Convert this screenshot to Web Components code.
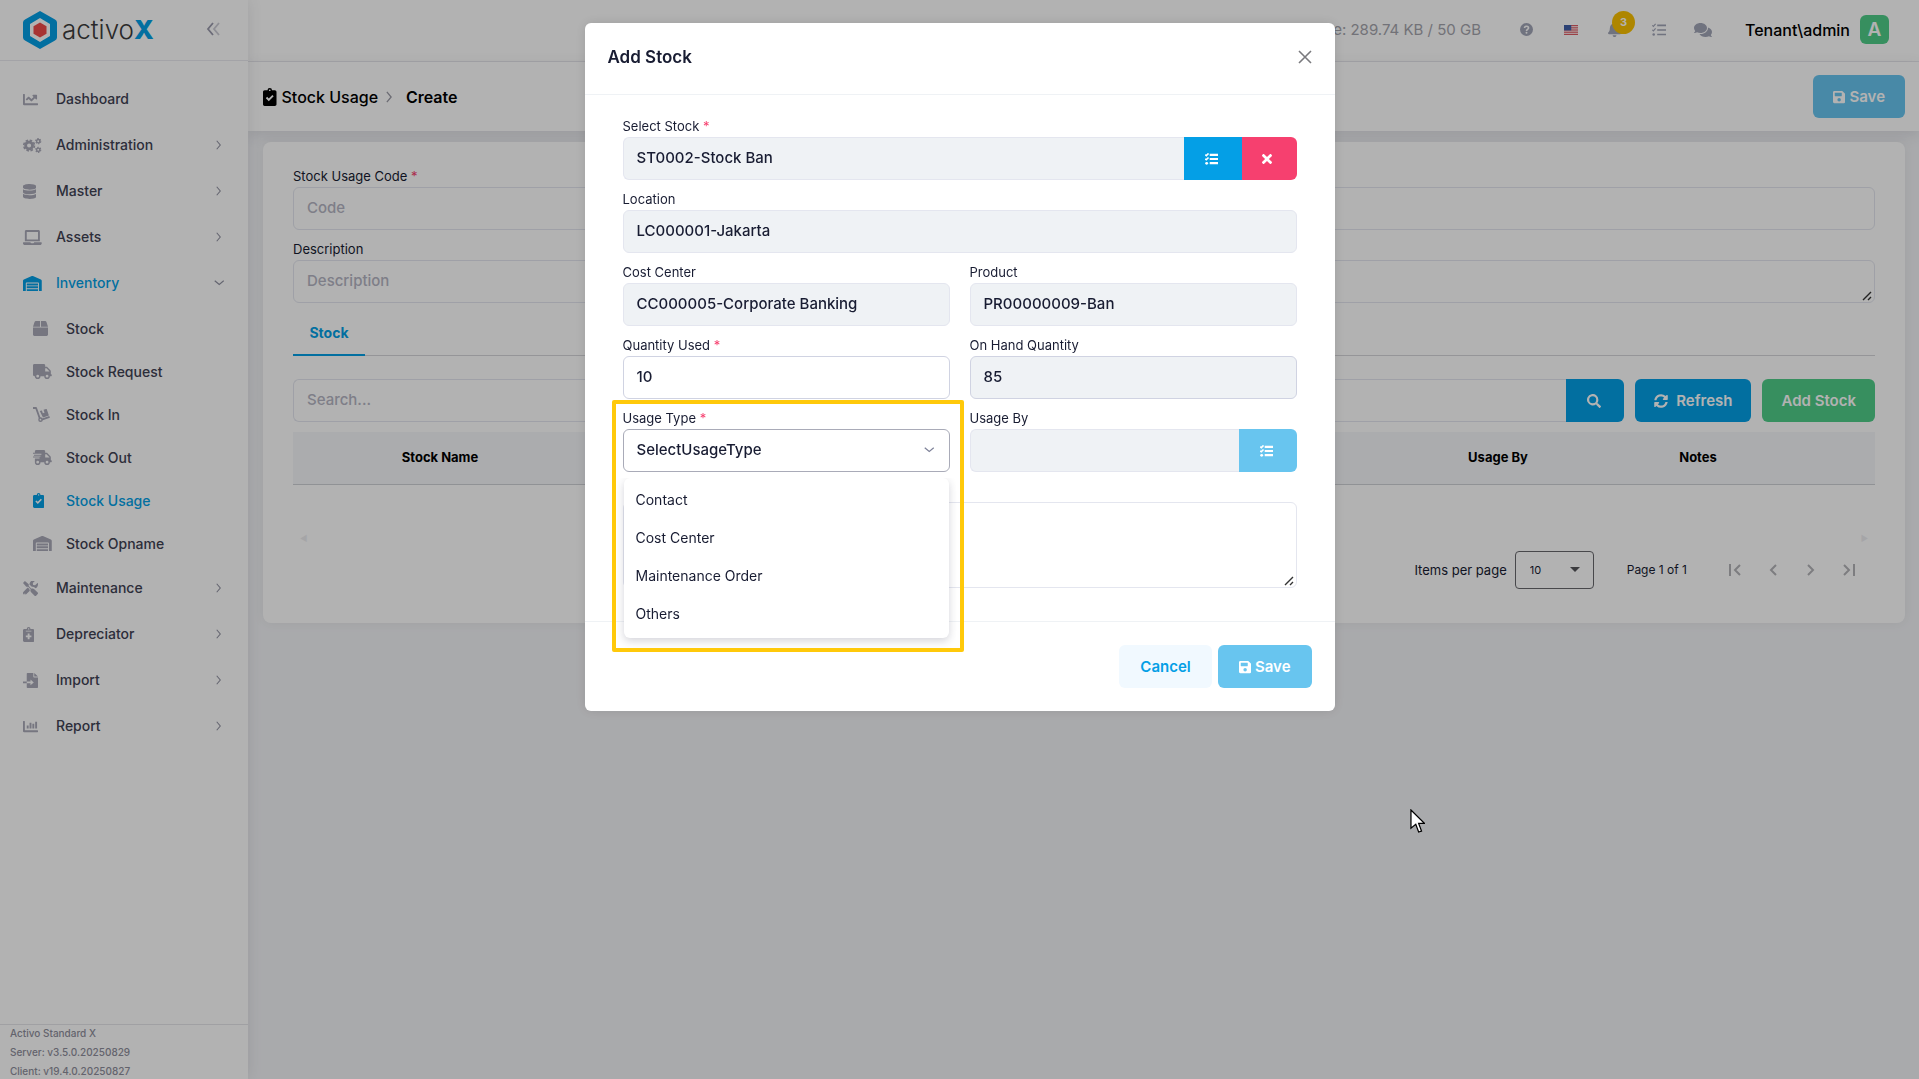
<!DOCTYPE html>
<html lang="en">
<head>
<meta charset="utf-8">
<meta name="viewport" content="width=device-width, initial-scale=1">
<title>Stock Usage - Create</title>
<style>
    body {
        margin: 0;
        font: 400 14px/20px Inter, "Open Sans", sans-serif;
        color: #181c32;
        --primary: #049fe6;
        --primary-soft: #68c5ef;
        --success: #50cd89;
        --danger: #f6406f;
        --muted: #b5b5c3;
        --line: #e4e6ef;
    }
</style>
</head>
<body>
<ax-app></ax-app>

<script>
const ICONS = {
    chartLine: ['0 0 512 512', '<path d="M496 384H64V80c0-9-7-16-16-16H16C7 64 0 71 0 80v336c0 18 14 32 32 32h464c9 0 16-7 16-16v-32c0-9-7-16-16-16zM464 96H346c-21 0-32 26-17 41l32 32-73 74-73-74c-13-12-33-12-46 0l-68 69c-7 6-7 16 0 23l22 22c7 7 17 7 23 0l46-46 73 74c13 12 33 12 46 0l96-96 32 32c15 15 41 4 41-17V112c0-9-7-16-16-16z"/>'],
    chartBar: ['0 0 512 512', '<path d="M320 160h64v160h-64zM416 96h64v224h-64zM128 224h64v96h-64zM224 128h64v192h-64zM496 384H64V80c0-9-7-16-16-16H16C7 64 0 71 0 80v336c0 18 14 32 32 32h464c9 0 16-7 16-16v-32c0-9-7-16-16-16z"/>'],
    cogs: ['0 0 640 512', '<g fill="none" stroke="currentColor"><circle cx="208" cy="256" r="118" stroke-width="96"/><circle cx="208" cy="256" r="182" stroke-width="56" stroke-dasharray="86 56.900"/><circle cx="520" cy="110" r="56" stroke-width="50"/><circle cx="520" cy="110" r="88" stroke-width="36" stroke-dasharray="52 40.150"/><circle cx="520" cy="402" r="56" stroke-width="50"/><circle cx="520" cy="402" r="88" stroke-width="36" stroke-dasharray="52 40.150"/></g>'],
    database: ['0 0 448 512', '<path d="M448 73v46c0 40-100 73-224 73S0 159 0 119V73C0 33 100 0 224 0s224 33 224 73zM448 176v103c0 40-100 73-224 73S0 319 0 279V176c48 33 136 49 224 49s176-16 224-49zm0 160v103c0 40-100 73-224 73S0 479 0 439V336c48 33 136 49 224 49s176-16 224-49z"/>'],
    laptop: ['0 0 640 512', '<path d="M624 416H382c-1 20-15 32-33 32h-61c-19 0-33-17-33-32H16c-9 0-16 7-16 16v16c0 35 29 64 64 64h512c35 0 64-29 64-64v-16c0-9-7-16-16-16zM576 48c0-26-22-48-48-48H112C86 0 64 22 64 48v336h512V48zm-64 272H128V64h384v256z"/>'],
    warehouse: ['0 0 640 512', '<path d="M504 352H136c-4 0-8 4-8 8v48c0 4 4 8 8 8h368c4 0 8-4 8-8v-48c0-4-4-8-8-8zm0 96H136c-4 0-8 4-8 8v48c0 4 4 8 8 8h368c4 0 8-4 8-8v-48c0-4-4-8-8-8zm0-192H136c-4 0-8 4-8 8v48c0 4 4 8 8 8h368c4 0 8-4 8-8v-48c0-4-4-8-8-8zm106-139L338 4a48 48 0 0 0-37 0L30 117C12 125 0 142 0 161v343c0 4 4 8 8 8h80c4 0 8-4 8-8V256c0-18 15-32 33-32h382c18 0 33 14 33 32v248c0 4 4 8 8 8h80c4 0 8-4 8-8V161c0-19-12-36-30-44z"/>'],
    box: ['0 0 512 512', '<path d="M510 185L459 33C452 13 434 0 413 0H272v192h239zM240 0H99c-21 0-39 13-46 33L2 185l-1 7h239V0zM0 224v240c0 27 21 48 48 48h416c27 0 48-21 48-48V224H0z"/>'],
    truck: ['0 0 640 512', '<path fill-rule="evenodd" d="M624 352h-16V244c0-13-5-25-14-34L494 110c-9-9-21-14-34-14h-44V48c0-27-21-48-48-48H48C21 0 0 21 0 48v320c0 27 21 48 48 48h16a96 96 0 0 0 192 0h128a96 96 0 0 0 192 0h48c9 0 16-7 16-16v-32c0-9-7-16-16-16zM160 464a48 48 0 1 1 0-96 48 48 0 0 1 0 96zm320 0a48 48 0 1 1 0-96 48 48 0 0 1 0 96zm80-208H416V144h44l100 100z"/>'],
    truckFast: ['0 0 640 512', '<path fill-rule="evenodd" d="M624 352h-16V244c0-13-5-25-14-34L494 110c-9-9-21-14-34-14h-44V48c0-27-21-48-48-48H112C86 0 64 21 64 48v48H0v32h288v32H32v32h224v32H0v32h224v32H64v128a96 96 0 0 0 192 0h128a96 96 0 0 0 192 0h48c9 0 16-7 16-16v-32c0-9-7-16-16-16zM160 464a48 48 0 1 1 0-96 48 48 0 0 1 0 96zm320 0a48 48 0 1 1 0-96 48 48 0 0 1 0 96zm80-208H416V144h44l100 100z"/>'],
    dolly: ['0 0 576 512', '<path fill="none" stroke="currentColor" stroke-width="62" stroke-linejoin="round" d="M0 34h105l125 352"/><path fill="none" stroke="currentColor" stroke-width="62" d="M300 430l266-92"/><circle cx="256" cy="432" r="54" fill="none" stroke="currentColor" stroke-width="48"/><path d="M232 140l70-24 34 96 58-20-34-96 84-29c12-4 22 1 26 12l72 208-202 70z"/>'],
    clipCheck: ['0 0 384 512', '<path fill-rule="evenodd" d="M336 64h-80a64 64 0 0 0-128 0H48C21 64 0 85 0 112v352c0 27 21 48 48 48h288c27 0 48-21 48-48V112c0-27-21-48-48-48zM192 40a24 24 0 1 1 0 48 24 24 0 0 1 0-48zM80 290l38-38 46 46 102-102 38 38-140 140z"/>'],
    clipPlus: ['0 0 384 512', '<path fill-rule="evenodd" d="M336 64h-80a64 64 0 0 0-128 0H48C21 64 0 85 0 112v352c0 27 21 48 48 48h288c27 0 48-21 48-48V112c0-27-21-48-48-48zM192 40a24 24 0 1 1 0 48 24 24 0 0 1 0-48zM96 128h192v24H96zM160 224h64v64h64v64h-64v64h-64v-64H96v-64h64z"/>'],
    tools: ['0 0 512 512', '<path d="M502 395L385 278c-27-27-68-33-101-16l-88-88v-62L64 0 0 64l112 132h62l88 88c-17 33-11 74 16 101l117 117c15 14 38 14 52 0l55-55c14-14 14-38 0-52zM332 199c28 0 55 11 75 31l19 19c16-7 30-16 43-29 38-38 51-91 40-139-3-10-15-13-22-6l-74 74-68-11-11-68 74-74c8-8 4-19-6-22-49-12-102 1-140 39-29 29-43 67-43 105l82 82c10-1 21-1 31-1zM218 277l-57-57L19 363c-25 25-25 65 0 90s65 25 90 0l123-123c-8-17-14-34-14-53zM64 472a24 24 0 1 1 0-48 24 24 0 0 1 0 48z"/>'],
    fileImport: ['0 0 512 512', '<path fill-rule="evenodd" d="M0 290v56h128v-56zM128 24v266h128v-66l112 96-112 96v-70H128v142c0 13 11 24 24 24h336c13 0 24-11 24-24V152H376c-13 0-24-11-24-24V0H152c-13 0-24 11-24 24zM384 0v120h128z"/>'],
    tasks: ['0 0 512 512', '<path fill="none" stroke="currentColor" stroke-width="42" d="M10 84l40 38 82-88M10 250l40 38 82-88"/><circle cx="62" cy="420" r="46"/><path d="M190 56h322v62H190zM190 224h322v62H190zM190 390h322v62H190z"/>'],
    tasksBold: ['0 0 512 448', '<path fill="none" stroke="currentColor" stroke-width="60" d="M10 64l40 36 82-84M10 216l40 36 82-84"/><circle cx="62" cy="386" r="54"/><path d="M176 24h336v84H176zM176 182h336v84H176zM176 340h336v84H176z"/>'],
    times: ['0 0 352 352', '<path d="M243 176l100-100c12-12 12-32 0-45L321 9c-13-12-33-12-45 0L176 109 76 9C64-3 44-3 31 9L9 31c-12 13-12 33 0 45l100 100L9 276c-12 12-12 32 0 45l22 22c13 12 33 12 45 0l100-100 100 100c12 12 32 12 45 0l22-22c12-13 12-33 0-45z"/>'],
    save: ['0 0 448 512', '<path fill-rule="evenodd" d="M434 130l-84-84a48 48 0 0 0-34-14H48C21 32 0 53 0 80v352c0 27 21 48 48 48h352c27 0 48-21 48-48V164a48 48 0 0 0-14-34zM224 416a64 64 0 1 1 0-128 64 64 0 0 1 0 128zM320 111v101c0 7-5 12-12 12H76c-7 0-12-5-12-12V108c0-7 5-12 12-12h229z"/>'],
    search: ['0 0 512 512', '<path fill-rule="evenodd" d="M505 443l-100-100c-4-4-10-7-17-7h-16c28-35 44-80 44-128a208 208 0 1 0-80 164v16c0 7 3 13 7 17l100 100c9 9 24 9 34 0l28-28c9-10 9-25 0-34zM208 336a128 128 0 1 1 0-256 128 128 0 0 1 0 256z"/>'],
    sync: ['0 0 512 512', '<path d="M371 133A168 168 0 0 0 93 215c-1 5-6 9-12 9H24c-7 0-13-7-12-14A248 248 0 0 1 427 77l36-36c15-15 41-4 41 17v134c0 13-11 24-24 24H346c-21 0-32-26-17-41zM32 296h134c21 0 32 26 17 41l-42 42a168 168 0 0 0 278-82c1-5 6-9 12-9h57c7 0 13 7 12 14A248 248 0 0 1 85 435l-36 36c-15 15-41 4-41-17V320c0-13 11-24 24-24z"/>'],
    bell: ['0 0 448 512', '<path d="M224 512c35 0 64-29 64-64H160c0 35 29 64 64 64zm215-150c-19-21-55-52-55-154 0-78-54-140-128-155V32a32 32 0 0 0-64 0v21C118 68 64 130 64 208c0 102-36 133-55 154-6 7-9 14-9 22 0 16 13 32 32 32h384c19 0 32-16 32-32 0-8-3-15-9-22z"/>'],
    comments: ['0 0 576 512', '<path d="M416 192c0-88-93-160-208-160S0 104 0 192c0 34 14 66 38 92-13 30-35 54-36 55-5 5-1 13 6 13 37 0 67-12 89-25 32 16 70 25 111 25 115 0 208-72 208-160zm122 220c24-26 38-58 38-92 0-67-53-124-129-148 1 7 1 13 1 20 0 106-108 192-240 192l-32-2c32 58 106 98 192 98 41 0 79-9 111-25 22 13 52 25 89 25 7 0 11-8 6-13-1-1-23-25-36-55z"/>'],
    help: ['0 0 16 16', '<circle cx="8" cy="8" r="8"/><path fill="none" stroke="#fff" stroke-width="2" d="M5.500 6.200C5.800 3.200 10.500 3.300 10.500 6.100 10.500 7.900 8 7.800 8 9.800"/><circle cx="8" cy="12" r="1.200" fill="#fff"/>'],
    right: ['0 0 8 14', '<path fill="none" stroke="currentColor" stroke-width="1.500" d="M1 1l5 6-5 6"/>'],
    down: ['0 0 14 8', '<path fill="none" stroke="currentColor" stroke-width="1.600" d="M1 1l6 5 6-5"/>'],
    caret: ['0 0 12 6', '<path d="M0 0h12L6 6z"/>'],
    grip: ['0 0 10 10', '<path fill="none" stroke="#333" stroke-width="1.400" d="M1 9l8-8M6 9l3-3"/>'],
    collapse: ['0 0 14 14', '<g fill="none" stroke="currentColor" stroke-width="1.800"><path d="M7 1L2 7l5 6"/><path opacity=".5" d="M13 1L8 7l5 6"/></g>'],
    close: ['0 0 14 14', '<path fill="none" stroke="currentColor" stroke-width="1.600" d="M1 1l12 12M13 1L1 13"/>'],
    first: ['0 0 14 14', '<path fill="none" stroke="currentColor" stroke-width="2" d="M2 1v12M12 2L7 7l5 5"/>'],
    prev: ['0 0 14 14', '<path fill="none" stroke="currentColor" stroke-width="2" d="M10 2L5 7l5 5"/>'],
    next: ['0 0 14 14', '<path fill="none" stroke="currentColor" stroke-width="2" d="M4 2l5 5-5 5"/>'],
    last: ['0 0 14 14', '<path fill="none" stroke="currentColor" stroke-width="2" d="M12 1v12M2 2l5 5-5 5"/>'],
    flag: ['0 0 16 11', '<path fill="#fff" d="M0 0h16v11H0z"/><path stroke="#d8434e" d="M0 .5h16M0 2.500h16M0 4.500h16M0 6.500h16M0 8.500h16M0 10.500h16"/><path fill="#3f5fa8" d="M0 0h8v6H0z"/>'],
    pointer: ['0 0 16 26', '<path fill="#fff" stroke="#000" stroke-width="1.300" d="M1 1v19l5-4 3 8 3-1-3-8h6z"/>'],
    logo: ['0 0 34 38', '<path fill="#049fe6" fill-rule="evenodd" d="M17 0l15 8.500q2 1 2 3v15q0 2-2 3L17 38 2 29.500q-2-1-2-3v-15q0-2 2-3zM17 7L7 13v12l10 6 10-6V13z"/><path fill="#f04a4a" d="M17 11.500l6.500 3.700v7.600L17 26.500l-6.500-3.700v-7.600z"/>']
};

class AxElement extends HTMLElement {
    connectedCallback() {
        if (this.shadowRoot) return;
        this.attachShadow({ mode: 'open' }).innerHTML = `<style>*{box-sizing:border-box}${this.css()}</style>${this.html()}`;
    }

    attr(name, fallback = '') {
        return this.getAttribute(name) || fallback;
    }
}

class AxIcon extends AxElement {
    css() {
        return `
            :host { display: inline-flex; flex: none; }
            svg { height: ${this.attr('size', '16')}px; display: block; }`;
    }

    html() {
        const [box, body] = ICONS[this.attr('name')];
        return `<svg viewBox="${box}" fill="currentColor" aria-hidden="true">${body}</svg>`;
    }
}

/* variants: primary, soft, success, danger, light; "joined" squares the left corners */
class AxButton extends AxElement {
    css() {
        return `
            :host { display: inline-flex; --bg: var(--primary); --fg: #fff; }
            :host([variant=soft]) { --bg: var(--primary-soft); }
            :host([variant=success]) { --bg: var(--success); }
            :host([variant=danger]) { --bg: var(--danger); }
            :host([variant=light]) { --bg: #f1f9ff; --fg: var(--primary); }
            button {
                height: 43px;
                padding: 0 var(--pad, 20px);
                display: flex;
                align-items: center;
                justify-content: center;
                gap: 4px;
                border: 0;
                border-radius: 6px;
                background: var(--bg);
                color: var(--fg);
                font: 600 15px/20px Inter, sans-serif;
                white-space: nowrap;
            }
            :host([joined]) button { width: 58px; border-radius: 0 6px 6px 0; padding: 0 2px 0 0; }
            :host([variant=danger]) button { width: 55px; padding-right: 4px; }
            :host([middle]) button { border-radius: 0; }`;
    }

    html() {
        return `<button type="button" aria-label="${this.attr('label')}"><slot></slot></button>`.replace(' aria-label=""', '');
    }
}

class AxField extends AxElement {
    css() {
        return `
            :host { display: block; position: relative; min-width: 0; }
            label { display: block; height: 20px; font: 400 13px/18px Inter, sans-serif; }
            i { color: var(--danger); font-style: normal; }
            .row { display: flex; position: relative; }
            input, textarea, select {
                flex: 1;
                min-width: 0;
                width: 100%;
                height: 43px;
                margin: 0;
                padding: 0 13px 2px;
                border: 1px solid var(--line);
                border-radius: 6px;
                background: #fff;
                color: #181c32;
                font: 500 15px/20px Inter, sans-serif;
                appearance: none;
                outline: 0;
            }
            textarea { padding: 10px 13px; display: block; resize: vertical; }
            textarea::-webkit-resizer { background: none; }
            :host([tall]) textarea { height: 86px; }
            ::placeholder { color: var(--muted); opacity: 1; }
            :host([readonly]) input { background: #eff2f5; }
            :host([group]) input { border-radius: 6px 0 0 6px; border-right: 0; }
            :host([strong]) input { border-color: #d0d3e2; }
            select { border-color: #a9abb8; }
            .row > ax-icon { position: absolute; right: 15px; top: 18px; color: #7e8299; }
            .row > .grip { right: 3px; top: auto; bottom: 2px; pointer-events: none; }`;
    }

    html() {
        const label = this.attr('label');
        const star = this.hasAttribute('required') ? ' <i>*</i>' : '';
        return `
            ${this.hasAttribute('bare') ? '' : `<label for="c">${label}${star}</label>`}
            <div class="row">${this.control(label)}<slot></slot></div>
            <slot name="menu"></slot>`;
    }

    control(label) {
        const hint = `aria-label="${label || 'Notes'}" placeholder="${this.attr('placeholder')}"`;
        if (this.attr('kind') === 'textarea') return `<textarea id="c" ${hint}></textarea><ax-icon class="grip" name="grip" size="10"></ax-icon>`;
        if (this.attr('kind') === 'select') {
            return `<select id="c"><option>${this.attr('value')}</option></select><ax-icon name="down" size="6"></ax-icon>`;
        }
        const ro = this.hasAttribute('readonly') ? 'readonly' : '';
        return `<input id="c" type="text" value="${this.attr('value')}" ${hint} ${ro}>`;
    }
}

class AxNavItem extends AxElement {
    css() {
        return `
            :host { display: block; }
            a {
                height: 46px;
                padding: 0 25px 0 23px;
                display: flex;
                align-items: center;
                color: #3f4254;
                font: 500 14px/20px Inter, sans-serif;
                text-decoration: none;
            }
            :host([sub]) a { height: 43px; padding-left: 33px; }
            .icon { width: 33px; display: flex; color: #a9a9b8; }
            .label { flex: 1; }
            .arrow { width: 8px; display: flex; justify-content: center; color: #8f90a0; }
            :host([active]) a, :host([active]) .icon { color: var(--primary); }`;
    }

    html() {
        const arrow = this.attr('arrow');
        return `<a href="#">
            <span class="icon"><ax-icon name="${this.attr('icon')}" size="15"></ax-icon></span>
            <span class="label"><slot></slot></span>
            ${arrow ? `<span class="arrow"><ax-icon name="${arrow}" size="${arrow === 'down' ? 6 : 10}"></ax-icon></span>` : ''}
        </a>`;
    }
}

class AxSidebar extends AxElement {
    css() {
        return `
            :host {
                width: 248px;
                flex: none;
                display: flex;
                flex-direction: column;
                background: #fff;
                box-shadow: 0 0 14px rgba(60, 60, 70, .12);
                z-index: 1;
            }
            header {
                height: 61px;
                padding: 0 28px 0 23px;
                display: flex;
                align-items: center;
                justify-content: space-between;
                border-bottom: 1px solid #eaeaef;
            }
            .brand { display: flex; align-items: center; gap: 5px; color: #3b3b3b; font: 300 26px/36px Inter, sans-serif; text-decoration: none; }
            .brand b { color: var(--primary); font-weight: 800; }
            .toggle { border: 0; padding: 0; background: none; color: #9a9aac; }
            nav { flex: 1; padding-top: 15px; }
            .sub { padding: 1px 0 0; }
            footer { height: 55px; overflow: hidden; padding-left: 10px; border-top: 1px solid #e6e6ea; color: #8f8f9c; font: 500 10px/16px Inter, sans-serif; }
            footer div { height: 19px; }`;
    }

    html() {
        return `
            <header>
                <a class="brand" href="#"><ax-icon name="logo" size="38"></ax-icon><span>activo<b>X</b></span></a>
                <button class="toggle" type="button" aria-label="Collapse"><ax-icon name="collapse" size="14"></ax-icon></button>
            </header>
            <nav>
                <ax-nav-item icon="chartLine">Dashboard</ax-nav-item>
                <ax-nav-item icon="cogs" arrow="right">Administration</ax-nav-item>
                <ax-nav-item icon="database" arrow="right">Master</ax-nav-item>
                <ax-nav-item icon="laptop" arrow="right">Assets</ax-nav-item>
                <ax-nav-item icon="warehouse" arrow="down" active>Inventory</ax-nav-item>
                <div class="sub">
                    <ax-nav-item sub icon="box">Stock</ax-nav-item>
                    <ax-nav-item sub icon="truck">Stock Request</ax-nav-item>
                    <ax-nav-item sub icon="dolly">Stock In</ax-nav-item>
                    <ax-nav-item sub icon="truckFast">Stock Out</ax-nav-item>
                    <ax-nav-item sub icon="clipCheck" active>Stock Usage</ax-nav-item>
                    <ax-nav-item sub icon="warehouse">Stock Opname</ax-nav-item>
                </div>
                <ax-nav-item icon="tools" arrow="right">Maintenance</ax-nav-item>
                <ax-nav-item icon="clipPlus" arrow="right">Depreciator</ax-nav-item>
                <ax-nav-item icon="fileImport" arrow="right">Import</ax-nav-item>
                <ax-nav-item icon="chartBar" arrow="right">Report</ax-nav-item>
            </nav>
            <footer>
                <div>Activo Standard X</div>
                <div>Server: v3.5.0.20250829</div>
                <div>Client: v19.4.0.20250827</div>
            </footer>`;
    }
}

class AxTopbar extends AxElement {
    css() {
        return `
            :host {
                height: 62px;
                padding: 0 30px 2px 0;
                box-sizing: border-box;
                display: flex;
                align-items: center;
                justify-content: flex-end;
                background: #fff;
                border-bottom: 1px solid #eaeaef;
            }
            .usage { margin-right: 24px; color: #a4a4ac; font-size: 15px; }
            button { width: 44px; height: 32px; padding: 0; display: flex; align-items: center; justify-content: center; position: relative; border: 0; background: none; color: #a1a5b7; }
            .badge { position: absolute; left: 19px; top: -3px; width: 23px; height: 23px; border-radius: 50%; background: #f9c100; color: #fff; font: 700 11px/23px Inter, sans-serif; }
            .user { margin: 0 10px 0 20px; color: #000; font-size: 16px; font-weight: 500; }
            .avatar { width: 29px; height: 29px; border-radius: 6px; background: var(--success); color: #fff; font: 600 19px/29px Inter, sans-serif; text-align: center; }`;
    }

    html() {
        return `
            <span class="usage">Usage: 289.74 KB / 50 GB</span>
            <button type="button" aria-label="Help"><ax-icon name="help" size="13"></ax-icon></button>
            <button type="button" aria-label="Language"><ax-icon name="flag" size="10"></ax-icon></button>
            <button type="button" aria-label="Notifications"><ax-icon name="bell" size="15"></ax-icon><span class="badge">3</span></button>
            <button type="button" aria-label="Tasks"><ax-icon name="tasks" size="14"></ax-icon></button>
            <button type="button" aria-label="Chat"><ax-icon name="comments" size="16"></ax-icon></button>
            <span class="user">Tenant\\admin</span>
            <span class="avatar">A</span>`;
    }
}

class AxTitlebar extends AxElement {
    css() {
        return `
            :host {
                height: 69px;
                padding: 0 14px 0 15px;
                box-sizing: border-box;
                display: flex;
                align-items: center;
                justify-content: space-between;
                background: #fff;
                box-shadow: 0 4px 14px rgba(60, 60, 70, .12);
            }
            nav { display: flex; align-items: center; color: #000; font: 500 16px/24px Inter, sans-serif; }
            nav a { color: inherit; text-decoration: none; margin-left: 5px; }
            nav .sep { margin: 0 13px 0 8px; color: #9a9aa5; }
            b { font-weight: 600; }`;
    }

    html() {
        return `
            <nav>
                <ax-icon name="clipCheck" size="18"></ax-icon>
                <a href="#">Stock Usage</a>
                <ax-icon class="sep" name="right" size="12"></ax-icon>
                <b>Create</b>
            </nav>
            <ax-button variant="soft"><ax-icon name="save" size="14"></ax-icon>Save</ax-button>`;
    }
}

class AxPager extends AxElement {
    css() {
        return `
            :host { display: flex; align-items: center; justify-content: flex-end; padding-right: 7px; font-size: 13px; }
            .size { position: relative; margin: 0 33px 0 8px; display: flex; align-items: center; }
            select { width: 79px; height: 38px; padding: 0 14px; border: 1px solid #68686c; border-radius: 4px; background: none; color: #181c32; font: 400 11px/16px Inter, sans-serif; appearance: none; }
            .size ax-icon { position: absolute; right: 14px; color: #55555a; }
            .page { font-size: 12px; }
            .nav { display: flex; margin-left: 29px; }
            .nav button { width: 38px; height: 38px; padding: 0; display: flex; align-items: center; justify-content: center; border: 0; background: none; color: #b4b4b8; }`;
    }

    html() {
        return `
            <label for="s">Items per page</label>
            <span class="size"><select id="s"><option>10</option></select><ax-icon name="caret" size="5"></ax-icon></span>
            <span class="page">Page 1 of 1</span>
            <span class="nav">${['first', 'prev', 'next', 'last'].map(n =>
                `<button type="button" aria-label="${n} page"><ax-icon name="${n}" size="14"></ax-icon></button>`).join('')}</span>`;
    }
}

class AxUsageCard extends AxElement {
    css() {
        return `
            :host { display: block; margin: 11px 14px 0 15px; padding: 25px 30px 34px; border-radius: 8px; background: #fff; box-shadow: 0 0 12px rgba(60, 60, 70, .08); }
            ax-field { margin-bottom: 10px; }
            .tabs { display: flex; border-bottom: 1px solid #d6d6da; }
            .tabs button { width: 72px; height: 43px; margin-bottom: -1px; padding: 0 0 2px; border: 0; border-bottom: 2px solid var(--primary); background: none; color: var(--primary); font: 700 14px/20px Inter, sans-serif; }
            .tools { display: flex; gap: 11px; margin: 23px 0 10px; --pad: 19px; }
            .tools ax-field { flex: 1; margin: 0; }
            .sync { margin-right: 4px; }
            table { width: 100%; border-collapse: collapse; table-layout: fixed; }
            th { height: 52px; padding: 0 0 2px; background: #f5f6fa; border-bottom: 1px solid #cfd1d6; font: 700 13px/20px Inter, sans-serif; color: #000; }
            .scroll { height: 66px; padding: 49px 7px 0; display: flex; justify-content: space-between; color: #ececf0; font-size: 8px; line-height: 8px; }`;
    }

    html() {
        return `
            <ax-field label="Stock Usage Code" placeholder="Code" required></ax-field>
            <ax-field label="Description" placeholder="Description" kind="textarea"></ax-field>
            <div class="tabs" role="tablist"><button type="button" role="tab">Stock</button></div>
            <div class="tools">
                <ax-field bare group label="Search" placeholder="Search...">
                    <ax-button joined label="Search"><ax-icon name="search" size="14"></ax-icon></ax-button>
                </ax-field>
                <ax-button><ax-icon class="sync" name="sync" size="14"></ax-icon>Refresh</ax-button>
                <ax-button variant="success">Add Stock</ax-button>
            </div>
            <table>
                <colgroup><col style="width:294px"><col><col style="width:200px"><col style="width:200px"><col style="width:77px"></colgroup>
                <thead><tr><th>Stock Name</th><th></th><th>Usage By</th><th>Notes</th><th></th></tr></thead>
            </table>
            <div class="scroll" aria-hidden="true"><span>◀</span><span>▶</span></div>
            <ax-pager></ax-pager>`;
    }
}

class AxModal extends AxElement {
    css() {
        return `
            :host { position: fixed; inset: 0; padding: 23px 16px; display: flex; justify-content: center; align-items: flex-start; background: rgba(0, 0, 0, .3); z-index: 5; --pad: 21px; }
            section { width: 100%; max-width: 750px; border-radius: 6px; background: #fff; box-shadow: 0 0 12px rgba(0, 0, 0, .12); }
            header { height: 72px; padding: 0 23px; display: flex; align-items: center; justify-content: space-between; border-bottom: 1px solid #eff2f5; }
            h2 { margin: 0; padding-bottom: 3px; font: 600 17px/24px Inter, sans-serif; }
            header button { border: 0; padding: 0; background: none; color: #7a7a7e; }
            footer { padding: 23px; display: flex; justify-content: flex-end; gap: 6px; border-top: 1px solid #eff2f5; }`;
    }

    html() {
        return `
            <section role="dialog" aria-labelledby="t">
                <header>
                    <h2 id="t">${this.attr('heading')}</h2>
                    <button type="button" aria-label="Close"><ax-icon name="close" size="14"></ax-icon></button>
                </header>
                <slot></slot>
                <footer><slot name="actions"></slot></footer>
            </section>`;
    }
}

class AxOptions extends AxElement {
    css() {
        return `
            :host { position: absolute; z-index: 2; top: 69px; left: 1px; right: 1px; }
            ul { margin: 0; padding: 4px 0; list-style: none; border-radius: 6px; background: #fff; box-shadow: 0 3px 8px rgba(40, 40, 70, .2); clip-path: inset(0 -8px -12px -8px); }
            li { padding: 8px 12px 10px; font: 400 14px/20px Inter, sans-serif; }`;
    }

    html() {
        return `<ul role="listbox">${this.attr('items').split(',').map(t => `<li role="option">${t}</li>`).join('')}</ul>`;
    }
}

class AxStockForm extends AxElement {
    css() {
        return `
            :host { padding: 22px 38px 33px; display: grid; grid-template-columns: 1fr 1fr; gap: 10px 20px; }
            .wide { grid-column: 1 / -1; }
            .mark { position: absolute; z-index: 3; inset: -9px -14px -180px -11px; border: 4px solid #ffc90a; border-radius: 2px; pointer-events: none; }`;
    }

    html() {
        return `
            <ax-field class="wide" label="Select Stock" value="ST0002-Stock Ban" required readonly group>
                <ax-button joined middle label="Choose stock"><ax-icon name="tasksBold" size="12"></ax-icon></ax-button>
                <ax-button joined variant="danger" label="Clear stock"><ax-icon name="times" size="10"></ax-icon></ax-button>
            </ax-field>
            <ax-field class="wide" label="Location" value="LC000001-Jakarta" readonly></ax-field>
            <ax-field label="Cost Center" value="CC000005-Corporate Banking" readonly></ax-field>
            <ax-field label="Product" value="PR00000009-Ban" readonly></ax-field>
            <ax-field label="Quantity Used" value="10" required strong></ax-field>
            <ax-field label="On Hand Quantity" value="85" readonly strong></ax-field>
            <ax-field label="Usage Type" value="SelectUsageType" kind="select" required>
                <ax-options slot="menu" items="Contact,Cost Center,Maintenance Order,Others"></ax-options>
                <div slot="menu" class="mark"></div>
            </ax-field>
            <ax-field label="Usage By" readonly group>
                <ax-button joined variant="soft" label="Choose usage"><ax-icon name="tasksBold" size="12"></ax-icon></ax-button>
            </ax-field>
            <ax-field class="wide" kind="textarea" tall></ax-field>`;
    }
}

class AxApp extends AxElement {
    css() {
        return `
            :host { min-height: 100vh; display: flex; background: #f3f4f7; }
            main { flex: 1; min-width: 0; }
            .pointer { position: fixed; z-index: 9; left: 1410px; top: 809px; }`;
    }

    html() {
        return `
            <ax-sidebar></ax-sidebar>
            <main>
                <ax-topbar></ax-topbar>
                <ax-titlebar></ax-titlebar>
                <ax-usage-card></ax-usage-card>
            </main>
            <ax-modal heading="Add Stock">
                <ax-stock-form></ax-stock-form>
                <ax-button slot="actions" variant="light">Cancel</ax-button>
                <ax-button slot="actions" variant="soft"><ax-icon name="save" size="14"></ax-icon>Save</ax-button>
            </ax-modal>
            <ax-icon class="pointer" name="pointer" size="25"></ax-icon>`;
    }
}

customElements.define('ax-icon', AxIcon);
customElements.define('ax-button', AxButton);
customElements.define('ax-field', AxField);
customElements.define('ax-nav-item', AxNavItem);
customElements.define('ax-sidebar', AxSidebar);
customElements.define('ax-topbar', AxTopbar);
customElements.define('ax-titlebar', AxTitlebar);
customElements.define('ax-pager', AxPager);
customElements.define('ax-usage-card', AxUsageCard);
customElements.define('ax-options', AxOptions);
customElements.define('ax-stock-form', AxStockForm);
customElements.define('ax-modal', AxModal);
customElements.define('ax-app', AxApp);
</script>
</body>
</html>
